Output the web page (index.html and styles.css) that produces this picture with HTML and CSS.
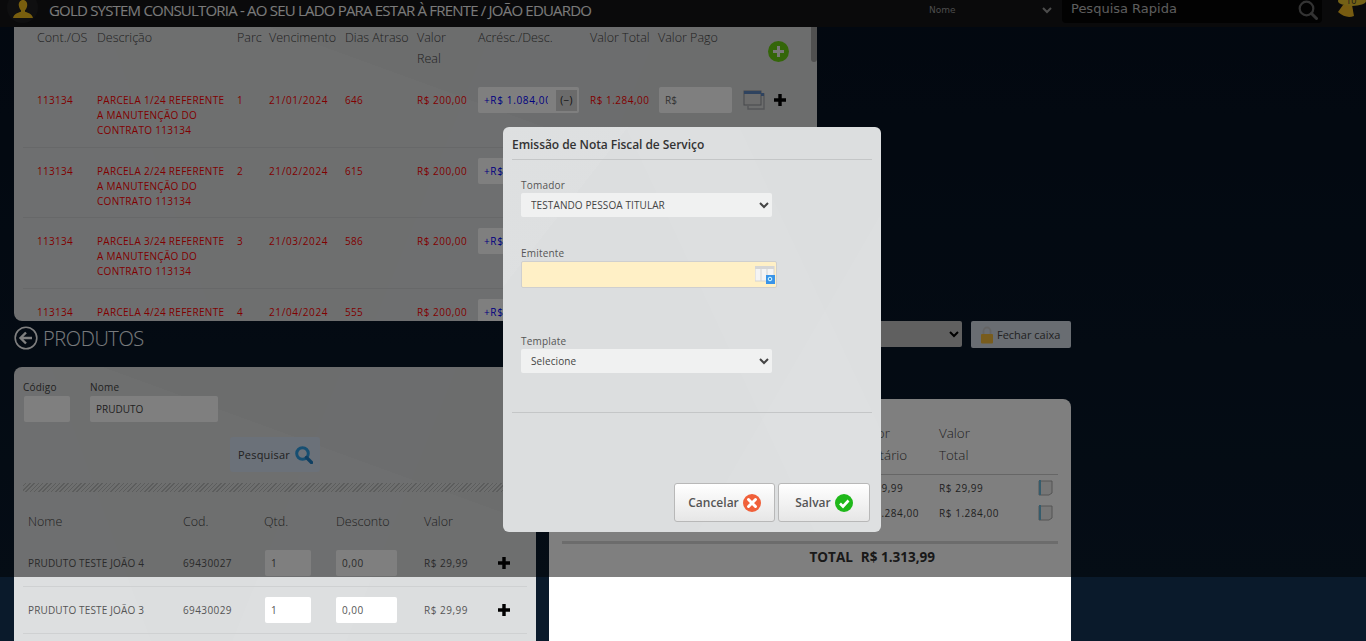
FILE: index.html
```html
<!DOCTYPE html>
<html lang="pt-BR">
<head>
  <meta charset="UTF-8" />
  <title>Gold System</title>
  <link rel="stylesheet" href="styles.css">
</head>
<body>

  <svg class="defs" width="0" height="0">
    <symbol id="ico-add" viewBox="0 0 14 14"><path d="M5 0h4v5h5v4H9v5H5V9H0V5h5z"/></symbol>
    <symbol id="ico-win" viewBox="0 0 22 20">
      <rect x="1" y="1" width="17" height="14" fill="#d8d8d8" stroke="#8d9097"/>
      <rect x="1" y="1" width="17" height="3" fill="#5f86bf"/>
      <path d="M18 4h3v15H5v-3" fill="none" stroke="#a8abb0" stroke-width="1.4"/>
      <rect x="18" y="3" width="3" height="3" fill="#5f86bf"/>
    </symbol>
    <symbol id="ico-doc" viewBox="0 0 15 17">
      <path d="M1 2h13v12l-3 2H1z" fill="#ececec" stroke="#a8a8a8"/>
      <rect x="1" y="1" width="2" height="15" fill="#6cb8d8"/>
    </symbol>
  </svg>

  <header class="topbar">
    <div class="avatar">
      <svg width="20" height="18" viewBox="0 0 20 18"><path d="M10 0c3 0 4.500 2.500 4.200 5.500-.2 2-1.200 3.800-2.200 4.800v1.500c2.500 1 7 1.800 8 6.200H0c1-4.400 5.500-5.200 8-6.200v-1.500C7 9.300 6 7.500 5.800 5.500 5.500 2.500 7 0 10 0z" fill="#f1bd1d"/></svg>
    </div>
    <div class="brand">GOLD SYSTEM CONSULTORIA - AO SEU LADO PARA ESTAR À FRENTE / JOÃO EDUARDO</div>
    <select class="search-type"><option>Nome</option></select>
    <div class="search">
      <span>Pesquisa Rapida</span>
      <svg width="20" height="20" viewBox="0 0 20 20"><circle cx="8.500" cy="8.500" r="6.800" fill="none" stroke="#666" stroke-width="2.200"/><path d="M13.500 13.500l5 5" stroke="#666" stroke-width="3" stroke-linecap="round"/></svg>
    </div>
    <div class="bell">
      <svg width="29" height="20" viewBox="0 0 29 20">
        <path d="M6 5h9l2 11q-8 3-16-4z" fill="#f0b822"/>
        <ellipse cx="15" cy="1" rx="14" ry="5" fill="#e8c22c"/>
        <text x="9" y="4" class="bell-num">10</text>
      </svg>
    </div>
  </header>

  <main class="page">
    <section class="panel poly contas">
      <span class="scroll-thumb"></span>
      <table class="tbl-contas">
        <colgroup>
          <col class="c1"><col class="c2"><col class="c3"><col class="c4"><col class="c5">
          <col class="c6"><col class="c7"><col class="c8"><col class="c9"><col class="c10">
        </colgroup>
        <thead>
          <tr>
            <th class="first">Cont./OS</th>
            <th>Descrição</th>
            <th>Parc</th>
            <th>Vencimento</th>
            <th>Dias Atraso</th>
            <th>Valor<br>Real</th>
            <th>Acrésc./Desc.</th>
            <th>Valor Total</th>
            <th>Valor Pago</th>
            <th>
              <span class="btn-add-all">
                <svg width="21" height="21" viewBox="0 0 21 21"><circle cx="10.500" cy="10.500" r="10.500" fill="#68cc12"/><path d="M9 5h3v4h4v3h-4v4H9v-4H5V9h4z" fill="#eee"/></svg>
              </span>
            </th>
          </tr>
        </thead>
        <tbody>
          <tr>
            <td class="first">113134</td>
            <td>PARCELA 1/24 REFERENTE A MANUTENÇÃO DO CONTRATO 113134</td>
            <td>1</td><td>21/01/2024</td><td>646</td><td>R$ 200,00</td>
            <td class="cell-input"><div class="acres"><input class="in-acres" value="+R$ 1.084,00"><span class="minus">(−)</span></div></td>
            <td>R$ 1.284,00</td>
            <td class="cell-input"><input class="in-pago" placeholder="R$"></td>
            <td class="cell-input"><div class="row-ico"><svg width="22" height="20"><use href="#ico-win"/></svg><svg class="plus" width="12" height="12"><use href="#ico-add"/></svg></div></td>
          </tr>
          <tr>
            <td class="first">113134</td>
            <td>PARCELA 2/24 REFERENTE A MANUTENÇÃO DO CONTRATO 113134</td>
            <td>2</td><td>21/02/2024</td><td>615</td><td>R$ 200,00</td>
            <td class="cell-input"><div class="acres"><input class="in-acres" value="+R$ 0,00"><span class="minus">(−)</span></div></td>
            <td>R$ 200,00</td>
            <td class="cell-input"><input class="in-pago" placeholder="R$"></td>
            <td class="cell-input"><div class="row-ico"><svg width="22" height="20"><use href="#ico-win"/></svg><svg class="plus" width="12" height="12"><use href="#ico-add"/></svg></div></td>
          </tr>
          <tr>
            <td class="first">113134</td>
            <td>PARCELA 3/24 REFERENTE A MANUTENÇÃO DO CONTRATO 113134</td>
            <td>3</td><td>21/03/2024</td><td>586</td><td>R$ 200,00</td>
            <td class="cell-input"><div class="acres"><input class="in-acres" value="+R$ 0,00"><span class="minus">(−)</span></div></td>
            <td>R$ 200,00</td>
            <td class="cell-input"><input class="in-pago" placeholder="R$"></td>
            <td class="cell-input"><div class="row-ico"><svg width="22" height="20"><use href="#ico-win"/></svg><svg class="plus" width="12" height="12"><use href="#ico-add"/></svg></div></td>
          </tr>
          <tr>
            <td class="first">113134</td>
            <td>PARCELA 4/24 REFERENTE A MANUTENÇÃO DO CONTRATO 113134</td>
            <td>4</td><td>21/04/2024</td><td>555</td><td>R$ 200,00</td>
            <td class="cell-input"><div class="acres"><input class="in-acres" value="+R$ 0,00"><span class="minus">(−)</span></div></td>
            <td>R$ 200,00</td>
            <td class="cell-input"><input class="in-pago" placeholder="R$"></td>
            <td class="cell-input"><div class="row-ico"><svg width="22" height="20"><use href="#ico-win"/></svg><svg class="plus" width="12" height="12"><use href="#ico-add"/></svg></div></td>
          </tr>
        </tbody>
      </table>
    </section>

    <div class="cols">
      <div class="col-left">
        <h2 class="sec-title">
          <svg width="24" height="24" viewBox="0 0 24 24"><circle cx="12" cy="12" r="10.800" fill="none" stroke="#fff" stroke-width="1.600"/><path d="M12 6.500L6.500 12l5.500 5.500M7 12h11" fill="none" stroke="#fff" stroke-width="2.400"/></svg>
          PRODUTOS
        </h2>
        <section class="panel poly produtos">
          <div class="busca">
            <label class="fld fld-cod">Código<input type="text"></label>
            <label class="fld fld-nome">Nome<input type="text" value="PRUDUTO"></label>
          </div>
          <div class="busca-btn">
            <button class="btn-pesq">Pesquisar
              <svg width="18" height="18" viewBox="0 0 18 18"><circle cx="7.500" cy="7.500" r="5.800" fill="none" stroke="#2f9fe4" stroke-width="3"/><path d="M11.500 11.500l5 5" stroke="#1f7fc4" stroke-width="3.400" stroke-linecap="round"/></svg>
            </button>
          </div>
          <div class="stripes"></div>
          <table class="tbl-prod">
            <colgroup><col class="p1"><col class="p2"><col class="p3"><col class="p4"><col class="p5"><col class="p6"></colgroup>
            <thead>
              <tr><th class="pad">Nome</th><th>Cod.</th><th>Qtd.</th><th>Desconto</th><th>Valor</th><th></th></tr>
            </thead>
            <tbody>
              <tr>
                <td class="pad">PRUDUTO TESTE JOÃO 4</td><td>69430027</td>
                <td><input class="in-qtd" value="1"></td><td><input class="in-desc" value="0,00"></td>
                <td>R$ 29,99</td><td><svg class="plus plus-prod" width="12" height="12"><use href="#ico-add"/></svg></td>
              </tr>
              <tr>
                <td class="pad">PRUDUTO TESTE JOÃO 3</td><td>69430029</td>
                <td><input class="in-qtd" value="1"></td><td><input class="in-desc" value="0,00"></td>
                <td>R$ 29,99</td><td><svg class="plus plus-prod" width="12" height="12"><use href="#ico-add"/></svg></td>
              </tr>
            </tbody>
          </table>
        </section>
      </div>

      <div class="col-right">
        <div class="caixa">
          <select class="sel-caixa"><option></option></select>
          <button class="btn-caixa">
            <svg width="14" height="18" viewBox="0 0 14 18"><path d="M3.500 8V5a3.500 3.500 0 017 0v3" fill="none" stroke="#c9c9c9" stroke-width="1.800"/><rect x="1" y="8" width="12" height="9.500" rx="1" fill="#f0b93a"/></svg>
            Fechar caixa
          </button>
        </div>
        <section class="panel carrinho">
          <table class="tbl-cart">
            <colgroup><col class="k1"><col class="k2"><col class="k3"><col class="k4"></colgroup>
            <thead>
              <tr><th>Descrição</th><th>Valor<br>Unitário</th><th>Valor<br>Total</th><th></th></tr>
            </thead>
            <tbody>
              <tr><td>PRUDUTO TESTE JOÃO 4</td><td>R$ 29,99</td><td>R$ 29,99</td><td><svg width="15" height="17"><use href="#ico-doc"/></svg></td></tr>
              <tr><td>PARCELA 1/24</td><td>R$ 1.284,00</td><td>R$ 1.284,00</td><td><svg width="15" height="17"><use href="#ico-doc"/></svg></td></tr>
            </tbody>
          </table>
          <div class="total"><b>TOTAL</b><b>R$ 1.313,99</b></div>
        </section>
      </div>
    </div>
  </main>

  <div class="overlay"></div>

  <div class="modal poly-light">
    <h3 class="modal-title">Emissão de Nota Fiscal de Serviço</h3>
    <div class="modal-body">
      <label class="m-fld">Tomador
        <select class="m-sel"><option>TESTANDO PESSOA TITULAR</option></select>
      </label>
      <label class="m-fld m-emit">Emitente
        <span class="emit-box">
          <input type="text">
          <svg width="20" height="18" viewBox="0 0 20 18">
            <rect x="0" y="0" width="19" height="15" fill="#f4f4f4" stroke="#d4d4d4"/>
            <rect x="0" y="0" width="19" height="3" fill="#d6d6d6"/>
            <path d="M6 3v12M12 3v12" stroke="#d4d4d4"/>
            <rect x="11" y="9" width="9" height="9" fill="#3a94e8"/>
            <circle cx="15" cy="13" r="1.800" fill="none" stroke="#dff" stroke-width="1"/>
          </svg>
        </span>
      </label>
      <label class="m-fld m-tpl">Template
        <select class="m-sel m-sel-sm"><option>Selecione</option></select>
      </label>
    </div>
    <div class="modal-foot">
      <button class="m-btn m-cancel">Cancelar
        <svg width="18" height="18" viewBox="0 0 18 18"><circle cx="9" cy="9" r="9" fill="#f0603a"/><path d="M5.500 5.500l7 7M12.500 5.500l-7 7" stroke="#fff" stroke-width="3" stroke-linecap="round"/></svg>
      </button>
      <button class="m-btn m-save">Salvar
        <svg width="18" height="18" viewBox="0 0 18 18"><circle cx="9" cy="9" r="9" fill="#1fb81a"/><path d="M5 9.500l3 3 5.500-6" fill="none" stroke="#fff" stroke-width="2.600"/></svg>
      </button>
    </div>
  </div>

</body>
</html>
```

FILE: styles.css
```css
html, body {
  margin: 0;
  padding: 0;
  height: 641px;
  overflow: hidden;
  font-family: "Open Sans", sans-serif;
  font-size: 10px;
  color: #555;
}

html {
  background: linear-gradient(#051020, #0a1a2b 90%);
}

.defs {
  display: block;
}

/* top bar */
.topbar {
  display: flex;
  align-items: flex-start;
  height: 27px;
  background: #141416;
  overflow: hidden;
}

.avatar {
  width: 31px;
  height: 31px;
  margin: -8px 0 0 7px;
  border-radius: 50%;
  background: #1e1e20;
  display: flex;
  justify-content: center;
  align-items: flex-end;
  flex: none;
}

.avatar svg {
  margin-bottom: 5px;
}

.brand {
  margin: 0 0 0 11px;
  width: 541px;
  flex: none;
  font-size: 15px;
  line-height: 20px;
  letter-spacing: -0.8px;
  white-space: nowrap;
  color: #f4f4f4;
}

.search-type {
  width: 130px;
  height: 20px;
  margin: 0 7px 0 auto;
  padding-left: 0;
  border: 0;
  background: transparent;
  color: #999;
  font: 9px "DejaVu Sans", sans-serif;
}

.search {
  display: flex;
  justify-content: space-between;
  width: 260px;
  height: 23px;
  padding: 0 4px 0 9px;
  box-sizing: border-box;
  background: #050505;
  border-radius: 0 0 4px 4px;
  color: #bbb;
  font: 13px/17px "DejaVu Sans", sans-serif;
}

.bell {
  flex: none;
  width: 29px;
  height: 27px;
  margin-left: 15px;
  overflow: hidden;
}

.bell-num {
  font: 9px "Open Sans", sans-serif;
  fill: #333;
}

/* page */
.page {
  width: 1057px;
  margin-left: 14px;
}

.panel {
  position: relative;
  overflow: hidden;
  background: #dcdedf;
}

.poly {
  background-image:
    linear-gradient(112deg, transparent 52%, rgba(255,255,255,.03) 52%, rgba(255,255,255,.03) 70%, transparent 70%),
    linear-gradient(200deg, rgba(0,0,0,.02) 34%, transparent 34%),
    linear-gradient(70deg, rgba(255,255,255,.03) 22%, transparent 22%);
}

.contas {
  width: 803px;
  height: 294px;
  border-radius: 0 0 8px 8px;
}

.scroll-thumb {
  position: absolute;
  top: 0;
  right: 0;
  width: 6px;
  height: 35px;
  border-radius: 0 0 3px 3px;
  background: #a0a0a0;
}

table {
  border-collapse: collapse;
  table-layout: fixed;
}

.tbl-contas {
  width: 780px;
  margin-left: 9px;
}

.c1 { width: 74px; }
.c2 { width: 140px; }
.c3 { width: 32px; }
.c4 { width: 76px; }
.c5 { width: 72px; }
.c6 { width: 61px; }
.c7 { width: 112px; }
.c8 { width: 68px; }
.c9 { width: 85px; }
.c10 { width: 60px; }

.tbl-contas th {
  padding: 0 0 8px 0;
  font-size: 12.500px;
  font-weight: 300;
  line-height: 21px;
  text-align: left;
  vertical-align: top;
  color: #444;
}

.tbl-contas th.first,
.tbl-contas td.first {
  padding-left: 14px;
}

.btn-add-all {
  display: block;
  margin: 14px 0 0 25px;
  height: 21px;
}

.tbl-contas td {
  padding: 16px 10px 8.500px 0;
  line-height: 15px;
  vertical-align: top;
  color: #f00;
  letter-spacing: 0.3px;
  border-bottom: 1px solid #cfd1d2;
}

.tbl-contas td:nth-child(4) {
  letter-spacing: 0.6px;
}

.tbl-contas td:nth-child(6),
.tbl-contas td:nth-child(8) {
  letter-spacing: 0.5px;
  padding-right: 0;
}

.tbl-contas td.cell-input {
  padding: 10px 0;
}

.acres {
  display: flex;
  align-items: center;
  width: 101px;
  height: 26px;
  padding-right: 2px;
  box-sizing: border-box;
  background: #fff;
  border-radius: 2px;
}

.in-acres {
  width: 64px;
  margin-left: 6px;
  padding: 0;
  border: 0;
  background: transparent;
  color: #00f;
  font: 10px "Open Sans", sans-serif;
  letter-spacing: 0.65px;
}

.minus {
  width: 21px;
  height: 21px;
  margin-left: auto;
  line-height: 20px;
  text-align: center;
  background: #d6d6d6;
  color: #222;
}

.in-pago {
  display: block;
  width: 73px;
  height: 26px;
  margin-left: 1px;
  padding: 0 6px;
  box-sizing: border-box;
  border: 0;
  border-radius: 2px;
  background: #fff;
  font: 10px "Open Sans", sans-serif;
}

.in-pago::placeholder {
  color: #666;
}

.row-ico {
  display: flex;
  align-items: center;
  gap: 9px;
  height: 26px;
}

.plus {
  display: block;
  fill: #000;
}

.plus-prod {
  margin-left: 8px;
}

/* columns */
.cols {
  display: grid;
  grid-template-columns: 522px 522px;
  gap: 13px;
}

.sec-title {
  display: flex;
  align-items: center;
  gap: 5px;
  height: 46px;
  margin: 0;
  padding-bottom: 12px;
  box-sizing: border-box;
  font-size: 20px;
  font-weight: 300;
  letter-spacing: -0.4px;
  color: #f2f7fa;
}

.produtos {
  height: 274px;
  border-radius: 8px 8px 0 0;
  padding: 14px 9px 0;
  box-sizing: border-box;
}

.busca {
  display: flex;
  height: 41px;
}

.fld {
  display: flex;
  flex-direction: column;
  gap: 2px;
  font-size: 10px;
  line-height: 13px;
  color: #444;
  letter-spacing: 0.2px;
}

.fld input {
  height: 26px;
  padding: 0 6px;
  box-sizing: border-box;
  border: 0;
  border-radius: 2px;
  background: #fff;
  color: #444;
  font: 10px "Open Sans", sans-serif;
}

.fld-cod input {
  width: 46px;
  margin-left: 1px;
}

.fld-nome {
  margin-left: 20px;
}

.fld-cod {
  width: 47px;
}

.fld-nome input {
  width: 128px;
}

.busca-btn {
  padding: 15px 0 0 207px;
}

.btn-pesq {
  display: flex;
  align-items: center;
  gap: 5px;
  width: 90px;
  height: 35px;
  padding: 0 0 0 8px;
  border: 0;
  border-radius: 3px;
  background: #d6e2f2;
  color: #444;
  font: 11px "Open Sans", sans-serif;
  letter-spacing: 0.2px;
}

.stripes {
  height: 9px;
  margin-top: 11px;
  background: repeating-linear-gradient(-45deg, #b8babb 0 1px, #dcdedf 1px 3px);
}

.tbl-prod {
  width: 504px;
}

.p1 { width: 160px; }
.p2 { width: 81px; }
.p3 { width: 72px; }
.p4 { width: 88px; }
.p5 { width: 66px; }
.p6 { width: 37px; }

.tbl-prod th {
  height: 48px;
  padding: 10px 0 0;
  box-sizing: border-box;
  font-size: 12.500px;
  font-weight: 300;
  text-align: left;
  color: #444;
}

.tbl-prod .pad {
  padding-left: 5px;
}

.tbl-prod td {
  padding: 10px 0;
  color: #555;
  letter-spacing: 0.15px;
  border-bottom: 1px solid #cfd1d2;
}

.tbl-prod td:nth-child(2) {
  letter-spacing: 0.4px;
}

.tbl-prod td:nth-child(5) {
  letter-spacing: 0.5px;
}

.in-qtd,
.in-desc {
  display: block;
  height: 26px;
  padding: 0 6px;
  box-sizing: border-box;
  border: 0;
  border-radius: 2px;
  background: #fff;
  color: #555;
  font: 10px "Open Sans", sans-serif;
  letter-spacing: 0.5px;
}

.in-qtd {
  width: 46px;
  margin-left: 1px;
}

.in-desc {
  width: 61px;
}

.col-right {
  min-width: 0;
}

.caixa {
  display: flex;
  justify-content: flex-end;
  gap: 9px;
  height: 27px;
}

.sel-caixa {
  width: 300px;
  height: 26px;
  border: 0;
  border-radius: 2px;
  background-color: #c0c0c0;
}

.btn-caixa {
  display: flex;
  align-items: center;
  gap: 3px;
  width: 100px;
  padding: 0 0 0 9px;
  border: 0;
  border-radius: 2px;
  background: #d2dae4;
  color: #444;
  font: 11px "Open Sans", sans-serif;
}

.carrinho {
  height: 242px;
  margin-top: 51px;
  padding: 23px 13px 0;
  box-sizing: border-box;
  background: #fff;
  border-radius: 8px 8px 0 0;
}

.tbl-cart {
  width: 496px;
}

.k1 { width: 297px; }
.k2 { width: 80px; }
.k3 { width: 99px; }
.k4 { width: 20px; }

.tbl-cart th {
  padding: 0 0 8px;
  font-size: 13.400px;
  font-weight: 300;
  line-height: 22px;
  text-align: left;
  color: #444;
  border-bottom: 1px solid #ccc;
}

.tbl-cart td {
  height: 25px;
  padding: 0;
  color: #444;
  letter-spacing: 0.55px;
}

.tbl-cart td svg {
  display: block;
}

.total {
  display: flex;
  justify-content: flex-end;
  gap: 8px;
  margin-top: 16px;
  padding: 4px 123px 0 0;
  border-top: 3px solid #d8d8d8;
  font-size: 13.500px;
  color: #333;
}

/* modal */
.overlay {
  position: absolute;
  top: 0;
  left: 0;
  width: 100%;
  height: 577px;
  background: rgba(0, 0, 0, .5);
}

.modal {
  position: absolute;
  top: 127px;
  left: 503px;
  display: flex;
  flex-direction: column;
  width: 378px;
  height: 405px;
  box-sizing: border-box;
  padding: 0 9px;
  background-color: #dcdedf;
  border-radius: 6px;
}

.poly-light {
  background-image:
    linear-gradient(128deg, rgba(255,255,255,.05) 18%, transparent 18%),
    linear-gradient(300deg, rgba(255,255,255,.04) 30%, transparent 30%),
    linear-gradient(65deg, transparent 55%, rgba(255,255,255,.04) 55%, rgba(255,255,255,.04) 75%, transparent 75%);
}

.modal-title {
  margin: 0;
  height: 33px;
  padding-top: 9px;
  box-sizing: border-box;
  border-bottom: 1px solid #c4c6c7;
  font-size: 12px;
  font-weight: 600;
  letter-spacing: -0.05px;
  color: #333;
}

.modal-body {
  padding: 18px 0 0 9px;
  height: 253px;
  box-sizing: border-box;
  border-bottom: 1px solid #c4c6c7;
}

.m-fld {
  display: block;
  font-size: 10px;
  line-height: 14px;
  color: #555;
  letter-spacing: 0.2px;
}

.m-sel {
  display: block;
  width: 251px;
  height: 24px;
  margin-top: 1px;
  padding-left: 6px;
  border: 0;
  border-radius: 2px;
  background: #f0f1f1;
  color: #444;
  font: 10px "Open Sans", sans-serif;
  letter-spacing: 0.1px;
}

.m-emit {
  margin-top: 29px;
}

.m-tpl {
  margin-top: 46px;
}

.emit-box {
  display: flex;
  align-items: center;
  width: 256px;
  height: 27px;
  margin-top: 1px;
  padding-right: 1px;
  box-sizing: border-box;
  background: #fff0c6;
  border: 1px solid #cfcfcf;
  border-radius: 2px;
}

.emit-box input {
  flex: 1;
  min-width: 0;
  border: 0;
  background: transparent;
}

.modal-foot {
  display: flex;
  justify-content: flex-end;
  gap: 3px;
  margin-top: auto;
  padding: 0 2px 10px 0;
}

.m-btn {
  display: flex;
  align-items: center;
  justify-content: center;
  gap: 4px;
  height: 39px;
  padding: 0;
  box-sizing: border-box;
  border: 1px solid #b8b8b8;
  border-radius: 3px;
  background: linear-gradient(#ffffff, #e6e6e6);
  color: #555;
  font: 600 12px "Open Sans", sans-serif;
}

.m-cancel {
  width: 101px;
}

.m-save {
  width: 92px;
}
```
